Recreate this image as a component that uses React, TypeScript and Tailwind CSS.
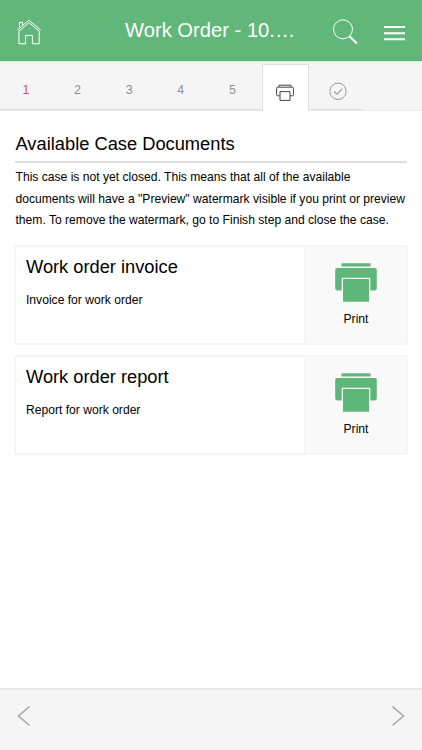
const documents = [
  { title: "Work order invoice", text: "Invoice for work order" },
  { title: "Work order report", text: "Report for work order" },
];

function HomeIcon() {
  return (
    <svg className="ml-4 mt-[5px] h-7 w-[26px]" viewBox="16 19 26 28" fill="none" stroke="#fff" strokeWidth="1">
      <path d="M17.2 30.2 29 20.2 40.8 30.2M18.9 31.2V43.8H25.6V35.4H32.4V43.8H39.2V31.2L29 22.7 18.9 31.2Z" />
      <path d="M19.4 27.8V22.4H22.6V25.3" />
    </svg>
  );
}

function PrintGlyph() {
  return (
    <svg className="h-10 w-[42px]" viewBox="0 0 42 40" fill="#5eb678">
      <path d="M6.5 .3H35.5V3.5H6.5zM2.5 5H39.5A2 2 0 0 1 41.8 7V25.2A2.3 2.3 0 0 1 39.5 27.5H35.3V14.8H6.7V27.5H2.5A2.3 2.3 0 0 1 .2 25.2V7A2 2 0 0 1 2.5 5z" />
      <path d="M8 16.1H34V38.8H8z" />
    </svg>
  );
}

export default function App() {
  return (
    <div className="flex h-[750px] w-[422px] flex-col overflow-hidden bg-white font-['Liberation_Sans',Arial,sans-serif] text-black">
      <header className="flex h-[62px] shrink-0 items-center border-b border-[#d3ebda] bg-[#60b779] text-white">
        <HomeIcon />
        <h1 className="mb-[2px] ml-[83px] w-[172px] whitespace-nowrap text-[20.2px] leading-6">Work Order - 10.…</h1>
        <svg className="ml-[34px] mt-[3px] h-7 w-7" viewBox="331 18 28 28" fill="none" stroke="#fff">
          <circle cx="343" cy="29.3" r="9.5" strokeWidth="1" />
          <path d="M349.5 36.2 357 43.5" strokeWidth="2" />
        </svg>
        <svg className="ml-[25px] mt-[5px] h-[18px] w-[21px]" viewBox="0 0 21 18" fill="#fff">
          <path d="M0 2H21V4H0zM0 8.2H21V10.2H0zM0 14.2H21V16.2H0z" />
        </svg>
      </header>

      <nav className="flex h-[49px] shrink-0 border-b border-[#ececec] bg-[#f5f5f5] text-[12.5px] text-[#929292]">
        <div className="flex w-[262px] border-b border-[#e0e0e0] pt-[20px] leading-4">
          <span className="w-[51.6px] pl-[22.5px] text-[#c9545c]">1</span>
          <span className="w-[51.6px] pl-[22.5px]">2</span>
          <span className="w-[51.6px] pl-[22.5px]">3</span>
          <span className="w-[51.6px] pl-[22.5px]">4</span>
          <span className="w-[51.6px] pl-[22.5px]">5</span>
        </div>
        <div className="mt-[2px] flex h-[47px] w-[47px] justify-center border border-b-0 border-[#dfdfdf] bg-white pr-px pt-[19px]">
          <svg className="h-[18px] w-[18px]" viewBox="0 0 18 18" fill="none" stroke="#444" strokeWidth="1">
            <path d="M3 2.8V1.2H15V2.8M3.6 11.8H1.6Q.6 11.8.6 10.8V4.2Q.6 3.2 1.6 3.2H16.4Q17.4 3.2 17.4 4.2V10.8Q17.4 11.8 16.4 11.8H14.4" />
            <path d="M4 7.6H14V16.4H4z" />
          </svg>
        </div>
        <div className="flex h-[48px] w-[55px] border-b border-[#e0e0e0] pl-5 pt-5">
          <svg className="h-[19px] w-[19px]" viewBox="0 0 19 19" fill="none" stroke="#999" strokeWidth="1">
            <circle cx="9" cy="9.3" r="8.2" />
            <path d="M5.2 9.5 8 12.2 13.2 6.8" strokeWidth="1.2" />
          </svg>
        </div>
      </nav>

      <main className="flex-1 px-[15px] pt-[21px]">
        <h2 className="h-[31px] border-b-2 border-[#dedede] pl-[.5px] text-[18.3px] leading-6">Available Case Documents</h2>
        <p className="whitespace-nowrap pl-[.5px] pt-[4px] text-[12.11px] leading-[21.5px]">
          This case is not yet closed. This means that all of the available<br />
          documents will have a "Preview" watermark visible if you print or preview<br />
          them. To remove the watermark, go to Finish step and close the case.
        </p>
        <div className="-ml-px mt-[13.5px] flex flex-col gap-[10px]">
          {documents.map((doc) => (
            <section key={doc.title} className="-mr-px flex h-[100px] overflow-hidden rounded-[3px] border-2 border-[#f5f5f5]">
              <div className="w-[290px] border-r-2 border-[#f4f4f4] pl-[10px] pt-[8px]">
                <h3 className="text-[18.25px] leading-6">{doc.title}</h3>
                <p className="mt-[13px] text-[12.11px] leading-4">{doc.text}</p>
              </div>
              <div className="flex flex-1 flex-col items-center bg-[#f9f9f9] pt-4">
                <PrintGlyph />
                <span className="mt-2 text-[12.11px] leading-4">Print</span>
              </div>
            </section>
          ))}
        </div>
      </main>

      <footer className="flex h-[62px] shrink-0 items-start justify-between border-t-2 border-[#e8e8e8] bg-[#f5f5f5] px-[17px] pt-4">
        <svg className="h-[22px] w-[14px]" viewBox="0 0 14 22" fill="none" stroke="#a6a6a6" strokeWidth="1.5"><path d="M12.5 .5 1.5 10 12.5 19.5" /></svg>
        <svg className="h-[22px] w-[14px]" viewBox="0 0 14 22" fill="none" stroke="#a6a6a6" strokeWidth="1.5"><path d="M1.5 .5 12.5 10 1.5 19.5" /></svg>
      </footer>
    </div>
  );
}
